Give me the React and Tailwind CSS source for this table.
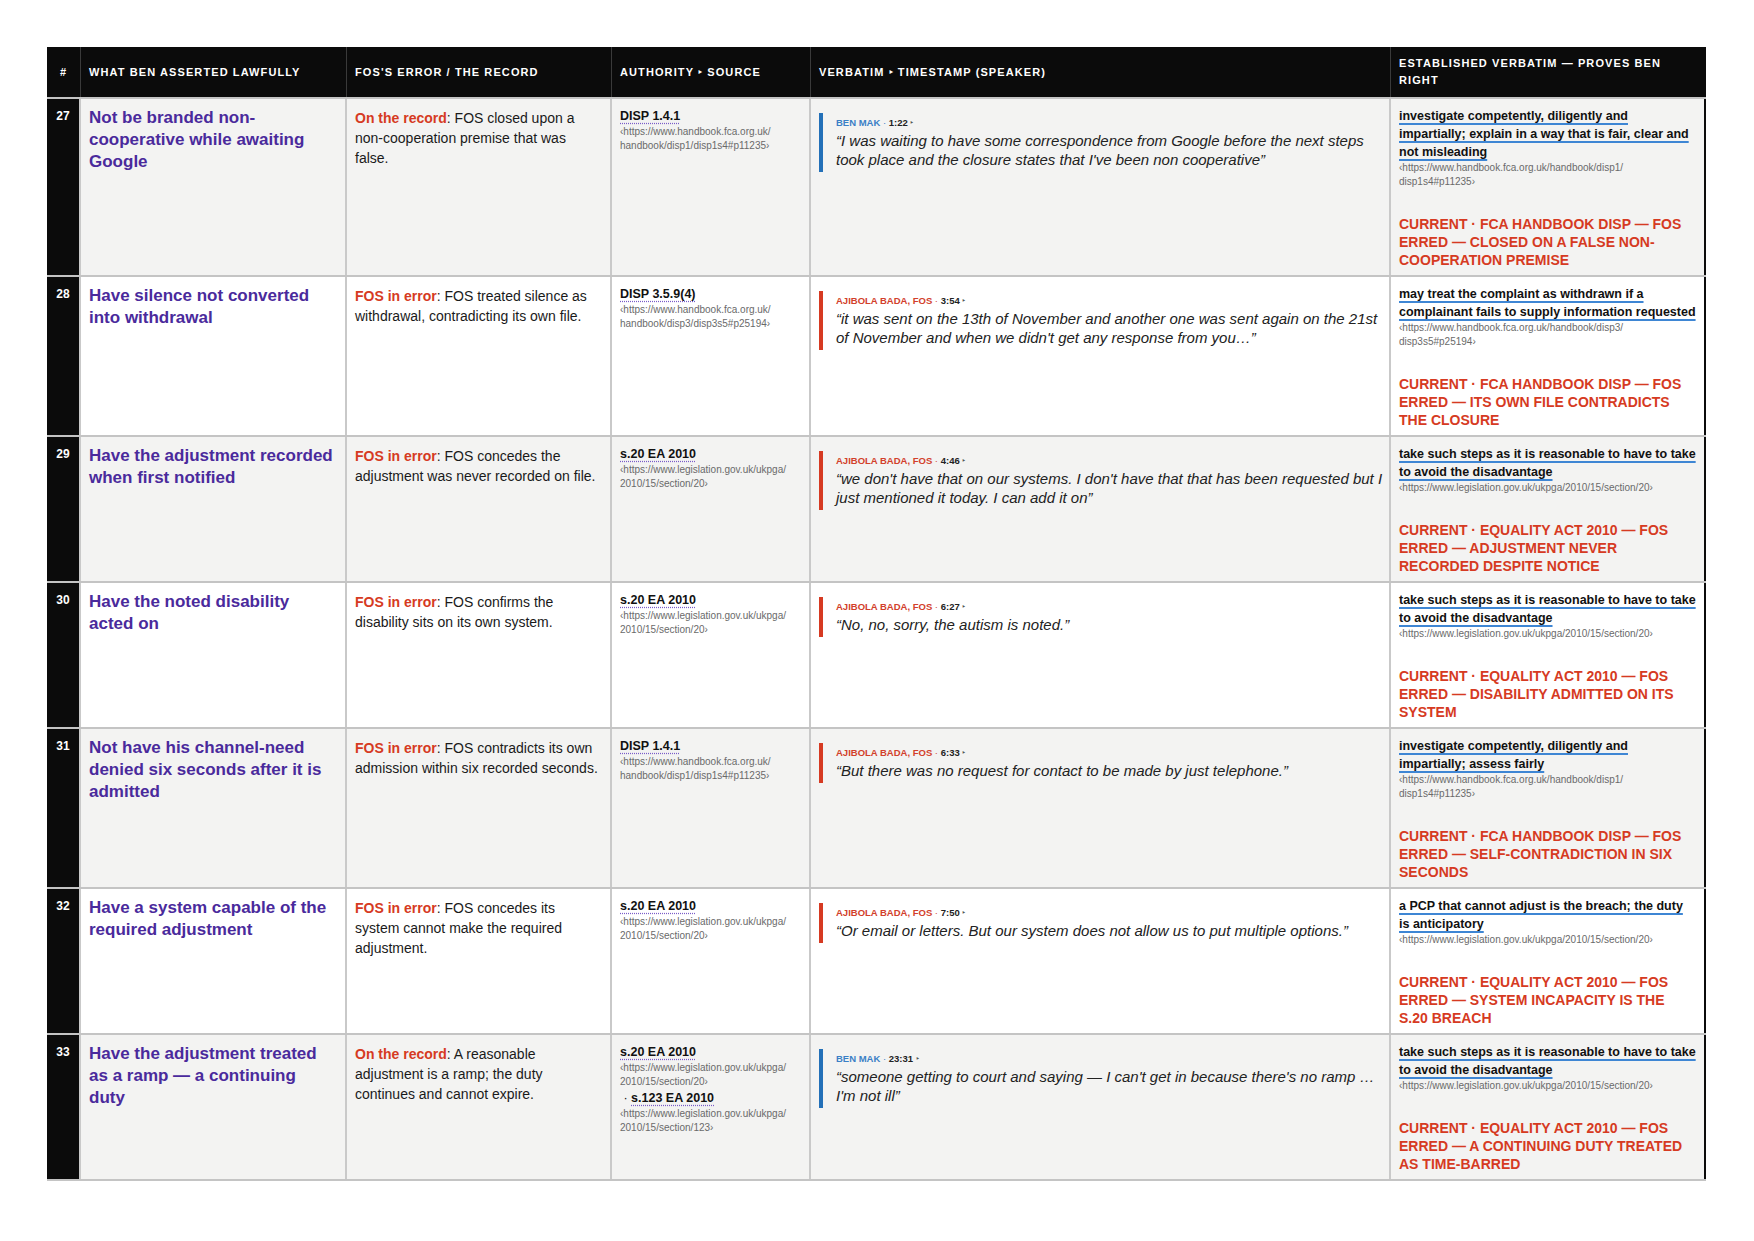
import React from "react";

const URL_DISP1 = ["‹https://www.handbook.fca.org.uk/", "handbook/disp1/disp1s4#p11235›"];
const URL_DISP3 = ["‹https://www.handbook.fca.org.uk/", "handbook/disp3/disp3s5#p25194›"];
const URL_S20 = ["‹https://www.legislation.gov.uk/ukpga/", "2010/15/section/20›"];
const URL_S123 = ["‹https://www.legislation.gov.uk/ukpga/", "2010/15/section/123›"];

const EST_DISP1 = ["‹https://www.handbook.fca.org.uk/handbook/disp1/", "disp1s4#p11235›"];
const EST_DISP3 = ["‹https://www.handbook.fca.org.uk/handbook/disp3/", "disp3s5#p25194›"];
const EST_S20 = ["‹https://www.legislation.gov.uk/ukpga/2010/15/section/20›"];

const STEPS = "take such steps as it is reasonable to have to take to avoid the disadvantage";

const rows = [
  {
    n: 27,
    claim: "Not be branded non-cooperative while awaiting Google",
    tag: "On the record",
    error: "FOS closed upon a non-cooperation premise that was false.",
    sources: [{ title: "DISP 1.4.1", url: URL_DISP1 }],
    speaker: "BEN MAK",
    ben: true,
    time: "1:22",
    quote: "“I was waiting to have some correspondence from Google before the next steps took place and the closure states that I've been non cooperative”",
    rule: "investigate competently, diligently and impartially; explain in a way that is fair, clear and not misleading",
    ruleUrl: EST_DISP1,
    verdict: "CURRENT · FCA HANDBOOK DISP — FOS ERRED — CLOSED ON A FALSE NON-COOPERATION PREMISE",
  },
  {
    n: 28,
    claim: "Have silence not converted into withdrawal",
    tag: "FOS in error",
    error: "FOS treated silence as withdrawal, contradicting its own file.",
    sources: [{ title: "DISP 3.5.9(4)", url: URL_DISP3 }],
    speaker: "AJIBOLA BADA, FOS",
    time: "3:54",
    quote: "“it was sent on the 13th of November and another one was sent again on the 21st of November and when we didn't get any response from you…”",
    rule: "may treat the complaint as withdrawn if a complainant fails to supply information requested",
    ruleUrl: EST_DISP3,
    verdict: "CURRENT · FCA HANDBOOK DISP — FOS ERRED — ITS OWN FILE CONTRADICTS THE CLOSURE",
  },
  {
    n: 29,
    claim: "Have the adjustment recorded when first notified",
    tag: "FOS in error",
    error: "FOS concedes the adjustment was never recorded on file.",
    sources: [{ title: "s.20 EA 2010", url: URL_S20 }],
    speaker: "AJIBOLA BADA, FOS",
    time: "4:46",
    quote: "“we don't have that on our systems. I don't have that that has been requested but I just mentioned it today. I can add it on”",
    rule: STEPS,
    ruleUrl: EST_S20,
    verdict: "CURRENT · EQUALITY ACT 2010 — FOS ERRED — ADJUSTMENT NEVER RECORDED DESPITE NOTICE",
  },
  {
    n: 30,
    claim: "Have the noted disability acted on",
    tag: "FOS in error",
    error: "FOS confirms the disability sits on its own system.",
    sources: [{ title: "s.20 EA 2010", url: URL_S20 }],
    speaker: "AJIBOLA BADA, FOS",
    time: "6:27",
    quote: "“No, no, sorry, the autism is noted.”",
    rule: STEPS,
    ruleUrl: EST_S20,
    verdict: "CURRENT · EQUALITY ACT 2010 — FOS ERRED — DISABILITY ADMITTED ON ITS SYSTEM",
  },
  {
    n: 31,
    claim: "Not have his channel-need denied six seconds after it is admitted",
    tag: "FOS in error",
    error: "FOS contradicts its own admission within six recorded seconds.",
    sources: [{ title: "DISP 1.4.1", url: URL_DISP1 }],
    speaker: "AJIBOLA BADA, FOS",
    time: "6:33",
    quote: "“But there was no request for contact to be made by just telephone.”",
    rule: "investigate competently, diligently and impartially; assess fairly",
    ruleUrl: EST_DISP1,
    verdict: "CURRENT · FCA HANDBOOK DISP — FOS ERRED — SELF-CONTRADICTION IN SIX SECONDS",
  },
  {
    n: 32,
    claim: "Have a system capable of the required adjustment",
    tag: "FOS in error",
    error: "FOS concedes its system cannot make the required adjustment.",
    sources: [{ title: "s.20 EA 2010", url: URL_S20 }],
    speaker: "AJIBOLA BADA, FOS",
    time: "7:50",
    quote: "“Or email or letters. But our system does not allow us to put multiple options.”",
    rule: "a PCP that cannot adjust is the breach; the duty is anticipatory",
    ruleUrl: EST_S20,
    verdict: "CURRENT · EQUALITY ACT 2010 — FOS ERRED — SYSTEM INCAPACITY IS THE S.20 BREACH",
  },
  {
    n: 33,
    claim: "Have the adjustment treated as a ramp — a continuing duty",
    tag: "On the record",
    error: "A reasonable adjustment is a ramp; the duty continues and cannot expire.",
    sources: [
      { title: "s.20 EA 2010", url: URL_S20 },
      { title: "s.123 EA 2010", url: URL_S123 },
    ],
    speaker: "BEN MAK",
    ben: true,
    time: "23:31",
    quote: "“someone getting to court and saying — I can't get in because there's no ramp … I'm not ill”",
    rule: STEPS,
    ruleUrl: EST_S20,
    verdict: "CURRENT · EQUALITY ACT 2010 — FOS ERRED — A CONTINUING DUTY TREATED AS TIME-BARRED",
  },
];

const cols = "grid grid-cols-[34px_266px_265px_199px_580px_315px]";

function HeaderCell({ children, last, center }) {
  return (
    <div
      className={`flex items-center py-2 text-[11px] font-bold uppercase leading-[17px] tracking-[0.1em] text-white ${
        center ? "justify-center" : "px-2"
      } ${last ? "" : "border-r border-[#3a3a3a]"}`}
    >
      <span>{children}</span>
    </div>
  );
}

function Row({ r, shade }) {
  const bg = shade ? "bg-[#f3f3f2]" : "bg-white";
  const cell = `border-r-2 border-[#c9c9c9] pl-2 pt-2 pb-2 ${bg}`;
  return (
    <div className={`${cols} border-b-2 border-[#c4c4c4]`}>
      {/* row number */}
      <div className="border-r-2 border-[#c9c9c9] bg-[#0b0b0b] pt-2 text-center text-[12px] font-bold leading-[18px] text-white">
        {r.n}
      </div>

      {/* claim */}
      <div className={`${cell} pr-[11px]`}>
        <p className="text-[17px] font-bold leading-[22px] text-[#4a2a9c]">{r.claim}</p>
      </div>

      {/* error / record */}
      <div className={`${cell} pt-[9px] pr-2`}>
        <p className="text-[14px] leading-[20px] text-[#1a1a1a]">
          <span className="font-semibold text-[#d63a22]">{r.tag}</span>
          {": " + r.error}
        </p>
      </div>

      {/* authority */}
      <div className={`${cell} pr-2`}>
        {r.sources.map((s, i) => (
          <div key={s.title}>
            <div className="text-[12.5px] font-bold leading-[18px] text-[#111]">
              {i > 0 && <span className="font-normal">&nbsp;· </span>}
              <span className="underline decoration-[#7a5cc8] decoration-dotted underline-offset-[3px]">{s.title}</span>
            </div>
            <div className="text-[10px] leading-[14px] text-[#6a6a6a]">
              {s.url.map((u) => (
                <div key={u}>{u}</div>
              ))}
            </div>
          </div>
        ))}
      </div>

      {/* verbatim */}
      <div className={`${cell} pr-[6px]`}>
        <div
          className={`mt-[6px] border-l-4 pt-[3px] pb-[3px] pl-[13px] ${
            r.ben ? "border-[#2370b8]" : "border-[#d63a22]"
          }`}
        >
          <div className="text-[9.5px] font-bold leading-[14px] text-[#222]">
            <span className={r.ben ? "text-[#3a7fc6]" : "text-[#d2402b]"}>{r.speaker}</span>
            <span className={`font-normal ${r.ben ? "text-[#3a7fc6]" : "text-[#d2402b]"}`}> · </span>
            {r.time}
            <span className="font-normal text-[#555]"> ‣</span>
          </div>
          <p className="mt-[1px] text-[15px] italic leading-[19px] text-[#222]">{r.quote}</p>
        </div>
      </div>

      {/* established verbatim */}
      <div className={`border-r-2 border-[#0b0b0b] px-2 pt-2 pb-[6px] ${bg}`}>
        <p className="text-[12.5px] font-bold leading-[18px] text-[#111]">
          <span className="underline decoration-[#3e86d4] decoration-2 underline-offset-[3px]">{r.rule}</span>
        </p>
        <div className="text-[10px] leading-[14px] text-[#6a6a6a]">
          {r.ruleUrl.map((u) => (
            <div key={u}>{u}</div>
          ))}
        </div>
        <p className="mt-[26px] text-[14px] font-bold leading-[18px] text-[#d63a22]">{r.verdict}</p>
      </div>
    </div>
  );
}

export default function App() {
  return (
    <div className="min-h-screen bg-white px-[47px] pt-[47px] pb-12 font-['Liberation_Sans',Arial,sans-serif]">
      <div className="w-[1659px]">
        <div className={`${cols} border-b-2 border-[#c4c4c4] bg-[#0b0b0b]`}>
          <HeaderCell center>#</HeaderCell>
          <HeaderCell>What Ben asserted lawfully</HeaderCell>
          <HeaderCell>FOS's error / the record</HeaderCell>
          <HeaderCell>Authority ‣ Source</HeaderCell>
          <HeaderCell>Verbatim ‣ Timestamp (speaker)</HeaderCell>
          <HeaderCell last>Established verbatim — proves Ben right</HeaderCell>
        </div>
        {rows.map((r, i) => (
          <Row key={r.n} r={r} shade={i % 2 === 0} />
        ))}
      </div>
    </div>
  );
}
